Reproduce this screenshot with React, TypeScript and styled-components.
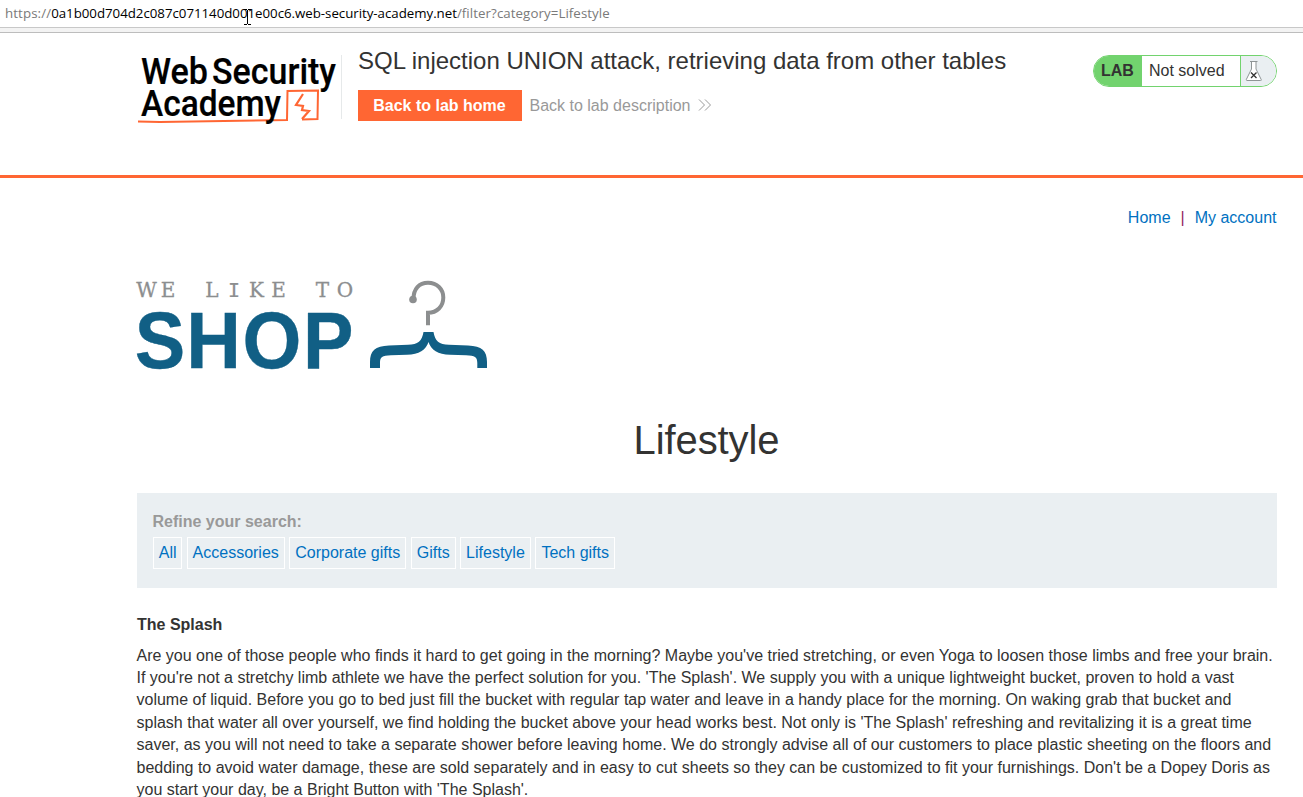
import React from 'react';
import styled, { createGlobalStyle } from 'styled-components';

const GlobalStyle = createGlobalStyle`
  * { box-sizing: border-box; }
  body {
    margin: 0;
    background: #fff;
    color: #333332;
    font: 16px/22.4px "Liberation Sans", Arial, sans-serif;
    overflow: hidden;
  }
  a { color: #0071c1; text-decoration: none; }
`;

const Page = styled.div`
  height: 797px;
  overflow: hidden;
`;

const AddressBar = styled.div`
  position: relative;
  height: 33px;
  padding: 0 5px;
  background: linear-gradient(#fff 27px, #c8c8c8 27px, #c8c8c8 28px, #f3f3f3 28px, #f3f3f3 32px, #bdbdbd 32px);
  color: #7a7a7a;
  font: 13.3px/27px "Open Sans", "Noto Sans", sans-serif;
  white-space: nowrap;
`;

const UrlPart = styled.span<{ $spacing: number; $strong?: boolean }>`
  letter-spacing: ${(p) => p.$spacing}px;
  color: ${(p) => (p.$strong ? '#000' : 'inherit')};
`;

const TextCursor = styled.svg`
  position: absolute;
  left: 244px;
  top: 9px;
`;

const LabHeader = styled.header`
  display: flex;
  align-items: flex-start;
  height: 145px;
  padding: 22px 26px 0 137px;
  border-bottom: 3px solid #ff6633;
`;

const LogoBox = styled.div`
  width: 205px;
  height: 64px;
  border-right: 1px solid #e6e9ea;
  svg { display: block; overflow: visible; }
`;

const TitleBox = styled.div`
  flex: 1;
  padding-left: 16px;
`;

const LabTitle = styled.h2`
  margin: -8px 0 0;
  font-size: 24px;
  font-weight: 400;
  line-height: 28px;
  letter-spacing: -0.01px;
  white-space: nowrap;
`;

const Actions = styled.div`
  display: flex;
  align-items: center;
  gap: 7.5px;
  margin-top: 15px;
  color: #999;
`;

const HomeButton = styled.a`
  width: 164px;
  height: 31px;
  padding-right: 1px;
  background: #ff6633;
  color: #fff !important;
  font-weight: 700;
  line-height: 31px;
  text-align: center;
`;

const DescriptionLink = styled.a`
  display: flex;
  align-items: center;
  gap: 7.5px;
  padding-top: 1px;
  color: #999 !important;
  svg { margin-top: -2px; }
`;

const Status = styled.div`
  display: flex;
  width: 184px;
  height: 32px;
  border: 1px solid #72d36e;
  border-radius: 16px;
  overflow: hidden;
  line-height: 30px;
`;

const StatusLabel = styled.b`
  width: 48px;
  padding-left: 7px;
  background: #72d36e;
`;

const StatusText = styled.span`
  width: 98px;
  padding-left: 7px;
`;

const StatusIcon = styled.span`
  flex: 1;
  padding: 4px 0 0 4px;
  border-left: 1px solid #72d36e;
  background: #eaeff2;
  svg { display: block; }
`;

const Main = styled.main`
  padding: 0 26px 0 137px;
`;

const Nav = styled.nav`
  display: flex;
  justify-content: flex-end;
  gap: 10px;
  padding: 29px 0.5px 0 0;
  color: #93265c;
`;

const ShopLogo = styled.svg`
  display: block;
  margin-top: 49px;
  overflow: visible;
`;

const PageTitle = styled.h1`
  margin: 47px 1px 0 0;
  font-size: 40px;
  font-weight: 400;
  line-height: 46px;
  letter-spacing: -0.1px;
  text-align: center;
`;

const Filters = styled.section`
  height: 95px;
  margin-top: 30px;
  padding: 18px 16px 0;
  background: #eaeff2;
`;

const FilterLabel = styled.div`
  height: 22px;
  margin-left: -0.5px;
  color: #999;
  font-weight: 700;
`;

const FilterList = styled.div`
  display: flex;
  gap: 4.5px;
  margin-top: 4px;
`;

const Filter = styled.a<{ $width: number }>`
  width: ${(p) => p.$width}px;
  height: 32px;
  border: 1px solid #fff;
  line-height: 30px;
  text-align: center;
  white-space: nowrap;
`;

const ProductTitle = styled.h3`
  margin: 26px 0 0;
  font-size: 16px;
  font-weight: 700;
`;

const Description = styled.div`
  margin: 7.8px 0 0 -0.5px;
`;

const Line = styled.div`
  white-space: nowrap;
`;

const filters: [string, number][] = [
  ['All', 29.2],
  ['Accessories', 98],
  ['Corporate gifts', 117],
  ['Gifts', 45],
  ['Lifestyle', 70.5],
  ['Tech gifts', 80],
];

const lines = [
  "Are you one of those people who finds it hard to get going in the morning? Maybe you've tried stretching, or even Yoga to loosen those limbs and free your brain.",
  "If you're not a stretchy limb athlete we have the perfect solution for you. 'The Splash'. We supply you with a unique lightweight bucket, proven to hold a vast",
  'volume of liquid. Before you go to bed just fill the bucket with regular tap water and leave in a handy place for the morning. On waking grab that bucket and',
  "splash that water all over yourself, we find holding the bucket above your head works best. Not only is 'The Splash' refreshing and revitalizing it is a great time",
  'saver, as you will not need to take a separate shower before leaving home. We do strongly advise all of our customers to place plastic sheeting on the floors and',
  "bedding to avoid water damage, these are sold separately and in easy to cut sheets so they can be customized to fit your furnishings. Don't be a Dopey Doris as",
  "you start your day, be a Bright Button with 'The Splash'.",
];

const AcademyLogo = () => (
  <svg width="204" height="72" viewBox="137 55 204 72">
    <g fill="#000" stroke="#000" strokeWidth="0.2" fontFamily="Roboto, sans-serif" fontWeight="500" fontSize="37">
      <text x="141" y="83.5" textLength="67" lengthAdjust="spacingAndGlyphs">Web</text>
      <text x="212" y="83.5" textLength="124" lengthAdjust="spacingAndGlyphs">Security</text>
    </g>
    <g fill="none" stroke="#ff6633">
      <path d="M138 121.5L160 122L287 120L287.5 91L318 90.5L317.5 119L302 119.5" strokeWidth="2" />
      <path d="M303 94L296 105L303 106L302 110L309 111L302 119" strokeWidth="2.2" />
    </g>
    <text x="141" y="116" textLength="140" lengthAdjust="spacingAndGlyphs" fill="#000" stroke="#000" strokeWidth="0.2" fontFamily="Roboto, sans-serif" fontWeight="500" fontSize="36">Academy</text>
  </svg>
);

export default function App() {
  return (
    <Page>
      <GlobalStyle />
      <AddressBar>
        <UrlPart $spacing={0.1}>https://</UrlPart>
        <UrlPart $spacing={-0.03} $strong>0a1b00d704d2c087c071140d001e00c6.web-security-academy.net</UrlPart>
        <UrlPart $spacing={0.07}>/filter?category=Lifestyle</UrlPart>
        <TextCursor width="8" height="16" viewBox="0 0 8 16" fill="none" stroke="#000">
          <path d="M0 .5H3M4 .5H7M3.5 1V15M0 15.5H3M4 15.5H7" />
        </TextCursor>
      </AddressBar>
      <LabHeader>
        <LogoBox><AcademyLogo /></LogoBox>
        <TitleBox>
          <LabTitle>SQL injection UNION attack, retrieving data from other tables</LabTitle>
          <Actions>
            <HomeButton>Back to lab home</HomeButton>
            <DescriptionLink>
              Back to lab description
              <svg width="14" height="12" viewBox="0 0 14 12" fill="none" stroke="#999">
                <path d="M1 .5L6.5 6L1 11.5M7 .5L12.5 6L7 11.5" />
              </svg>
            </DescriptionLink>
          </Actions>
        </TitleBox>
        <Status>
          <StatusLabel>LAB</StatusLabel>
          <StatusText>Not solved</StatusText>
          <StatusIcon>
            <svg width="18" height="22" viewBox="0 0 18 22" fill="none">
              <path d="M6.5 2V9L1.3 19.5Q1.2 20.5 2 20.5H15.5Q16.8 20.5 16.2 19.5L11 9V2" fill="#fff" stroke="#8f9596" />
              <path d="M5 1.5H12.5" stroke="#8f9596" />
              <path d="M6 12.5L11.5 18M11.5 12.5L6 18" stroke="#333332" strokeWidth="1.3" />
            </svg>
          </StatusIcon>
        </Status>
      </LabHeader>
      <Main>
        <Nav><a>Home</a><span>|</span><a>My account</a></Nav>
        <ShopLogo width="352" height="92" viewBox="137 278 352 92">
          <g fill="#8c8e8f" stroke="#8c8e8f" strokeWidth="0.3" fontFamily="DejaVu Serif, serif" fontSize="20" textAnchor="middle">
            <text y="296.5" x="146.5 168 190 212">WE L</text>
            <text y="296.5" x="234" fontFamily="DejaVu Sans Mono, monospace" strokeWidth="0.2">I</text>
            <text y="296.5" x="256.5 278.5 300.5 322.5 345">KE TO</text>
          </g>
          <text transform="scale(.94 1)" x="143.4 198.2 258.1 322.3" y="367.7" fill="#115f85" stroke="#115f85" strokeWidth="0.4" fontFamily="Liberation Sans, Arial, sans-serif" fontWeight="700" fontSize="80.5">SHOP</text>
          <circle cx="413" cy="299.5" r="3.8" fill="#8c8e8f" />
          <path d="M413.5 299C413.5 289 419 282.8 428 282.8C437 282.8 443.3 289 443.3 297.5C443.3 306.5 437 312.8 428 312.8V325.3" fill="none" stroke="#8c8e8f" strokeWidth="4" />
          <path d="M423.5 332H433.5C435 341 439 344.5 449 344.8L468 345.5C482 346 487 351 487 362V368H477.3V363C477.3 357 475 355.5 466 355.2L450 354.8C438 354.5 431 350 428.5 342C426 350 419 354.5 407 354.8L391 355.2C382 355.5 380 357 380 363V368H370V362C370 351 375 346 389 345.5L408 344.8C418 344.5 422 341 423.5 332Z" fill="#115f85" />
        </ShopLogo>
        <PageTitle>Lifestyle</PageTitle>
        <Filters>
          <FilterLabel>Refine your search:</FilterLabel>
          <FilterList>
            {filters.map(([name, width]) => <Filter key={name} $width={width}>{name}</Filter>)}
          </FilterList>
        </Filters>
        <ProductTitle>The Splash</ProductTitle>
        <Description>
          {lines.map((line) => <Line key={line}>{line}</Line>)}
        </Description>
      </Main>
    </Page>
  );
}
